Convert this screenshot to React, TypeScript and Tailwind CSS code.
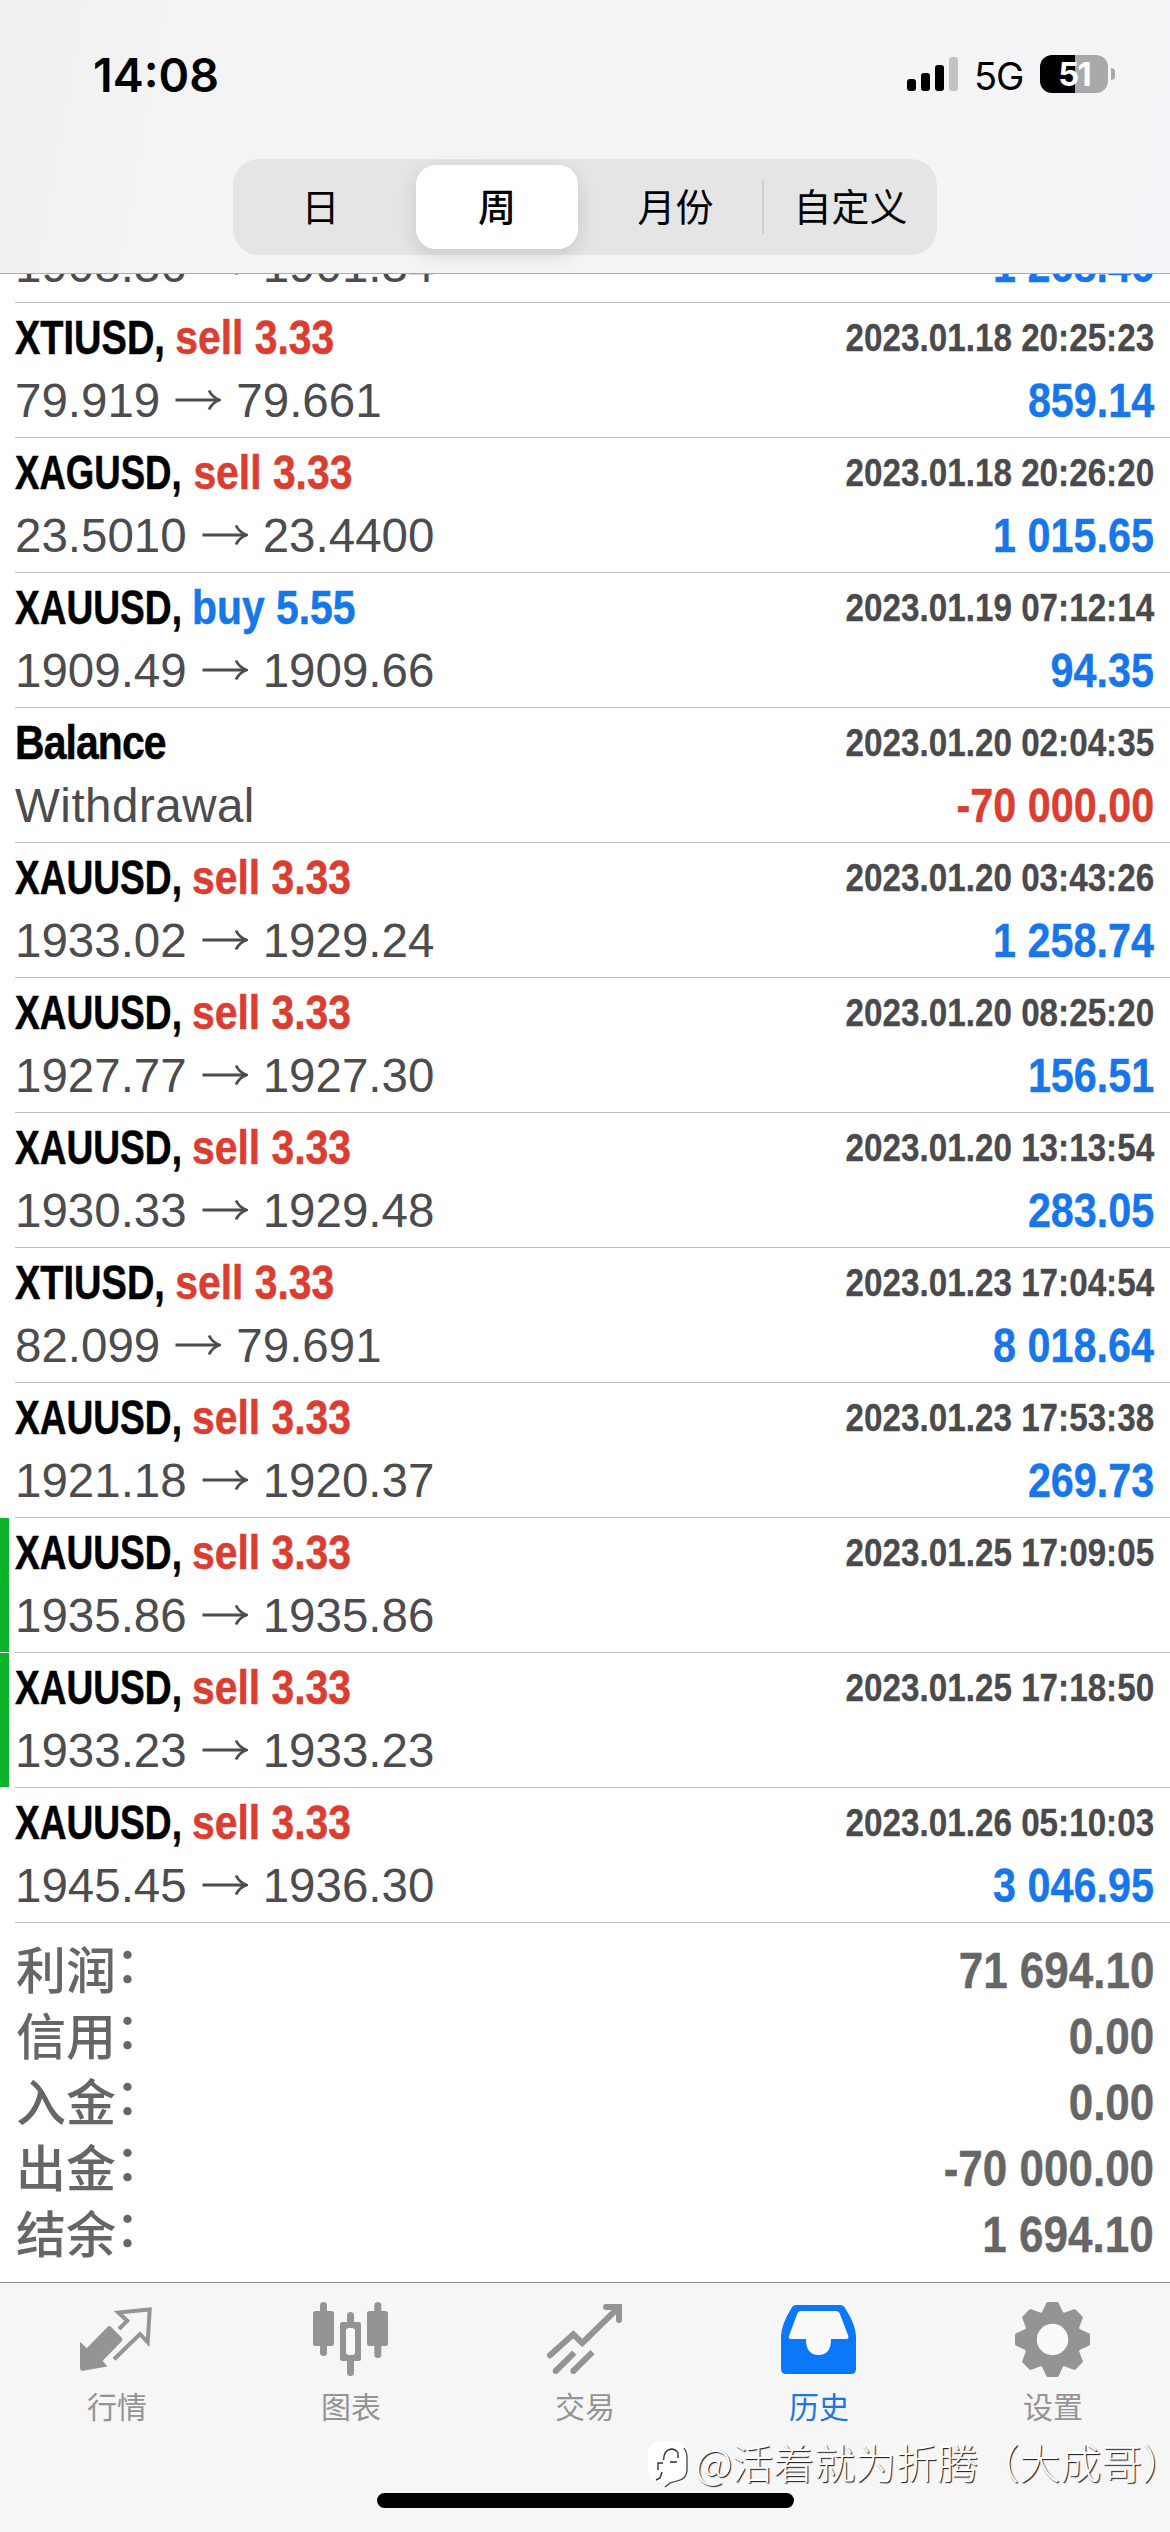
type Trade = {
  symbol: string;
  side?: 'sell' | 'buy';
  volume?: string;
  open?: string;
  close?: string;
  note?: string;
  time: string;
  profit?: string;
  marked?: boolean;
};

const trades: Trade[] = [
  { symbol: 'XTIUSD', side: 'sell', volume: '3.33', open: '79.919', close: '79.661', time: '2023.01.18 20:25:23', profit: '859.14' },
  { symbol: 'XAGUSD', side: 'sell', volume: '3.33', open: '23.5010', close: '23.4400', time: '2023.01.18 20:26:20', profit: '1 015.65' },
  { symbol: 'XAUUSD', side: 'buy', volume: '5.55', open: '1909.49', close: '1909.66', time: '2023.01.19 07:12:14', profit: '94.35' },
  { symbol: 'Balance', note: 'Withdrawal', time: '2023.01.20 02:04:35', profit: '-70 000.00' },
  { symbol: 'XAUUSD', side: 'sell', volume: '3.33', open: '1933.02', close: '1929.24', time: '2023.01.20 03:43:26', profit: '1 258.74' },
  { symbol: 'XAUUSD', side: 'sell', volume: '3.33', open: '1927.77', close: '1927.30', time: '2023.01.20 08:25:20', profit: '156.51' },
  { symbol: 'XAUUSD', side: 'sell', volume: '3.33', open: '1930.33', close: '1929.48', time: '2023.01.20 13:13:54', profit: '283.05' },
  { symbol: 'XTIUSD', side: 'sell', volume: '3.33', open: '82.099', close: '79.691', time: '2023.01.23 17:04:54', profit: '8 018.64' },
  { symbol: 'XAUUSD', side: 'sell', volume: '3.33', open: '1921.18', close: '1920.37', time: '2023.01.23 17:53:38', profit: '269.73' },
  { symbol: 'XAUUSD', side: 'sell', volume: '3.33', open: '1935.86', close: '1935.86', time: '2023.01.25 17:09:05', marked: true },
  { symbol: 'XAUUSD', side: 'sell', volume: '3.33', open: '1933.23', close: '1933.23', time: '2023.01.25 17:18:50', marked: true },
  { symbol: 'XAUUSD', side: 'sell', volume: '3.33', open: '1945.45', close: '1936.30', time: '2023.01.26 05:10:03', profit: '3 046.95' },
];

const summary = [
  ['利润', '71 694.10'],
  ['信用', '0.00'],
  ['入金', '0.00'],
  ['出金', '-70 000.00'],
  ['结余', '1 694.10'],
];

function StatusBar() {
  return (
    <div className="flex h-[159px] items-start justify-between pl-[93px] pr-[55px] text-black">
      <div className="mt-[47px] font-['Inter'] text-[46.5px] leading-[56px] font-semibold">14:08</div>
      <div className="mt-[55px] flex h-[38px] items-center">
        <div className="flex h-[34px] items-end gap-[5px]">
          <span className="h-[12px] w-[9px] rounded-[3px] bg-black" />
          <span className="h-[18px] w-[9px] rounded-[3px] bg-black" />
          <span className="h-[26px] w-[9px] rounded-[3px] bg-black" />
          <span className="h-[34px] w-[9px] rounded-[3px] bg-[#c3c3c4]" />
        </div>
        <div className="mt-[3px] ml-[16px] w-[50px] font-['Inter'] text-[38px] leading-[38px] tracking-[-1px]">5G</div>
        <div className="ml-[16px] flex h-[38px] w-[68px] items-center justify-center rounded-[12px] bg-[linear-gradient(90deg,#000_0_35px,#a9a9ab_35px)] font-['Inter'] text-[33px] leading-[38px] font-bold tracking-[-2px] text-white">
          51
        </div>
        <div className="ml-[3px] h-[12px] w-[4px] rounded-r-[4px] bg-[#a9a9ab]" />
      </div>
    </div>
  );
}

function Segmented() {
  return (
    <div className="mx-auto flex h-[96px] w-[704px] items-center rounded-[26px] bg-[#e5e5e6] font-['Noto_Sans_CJK_SC',sans-serif] text-[38px] text-black">
      <div className="w-[183px] pr-[8px] pb-[5px] text-center">日</div>
      <div className="flex h-[84px] w-[162px] items-center justify-center rounded-[20px] bg-white pb-[5px] font-medium shadow-[0_6px_20px_rgba(0,0,0,0.13)]">周</div>
      <div className="w-[184px] pb-[5px] pl-[11px] text-center">月份</div>
      <div className="h-[54px] w-[2px] bg-[#cfcfd1]" />
      <div className="w-[173px] pb-[5px] text-center">自定义</div>
    </div>
  );
}

function Arrow() {
  return (
    <svg className="mx-[15px] mt-[20px] h-[22px] w-[46px]" viewBox="0 0 46 22" fill="none" stroke="#4c4c4e" strokeWidth="2.8">
      <path d="M0.5 11H44" />
      <path d="M34 1.5Q37 8 44.5 11Q37 14 34 20.5" />
    </svg>
  );
}

function PriceLine({ t }: { t: Pick<Trade, 'open' | 'close' | 'note' | 'profit'> }) {
  const profitColor = t.profit?.startsWith('-') ? 'text-[#db3d30]' : 'text-[#1777ea]';
  return (
    <div className="flex h-[63px] justify-between text-[47.5px] leading-[63px] whitespace-nowrap">
      {t.note ? (
        <div className="tracking-[0.5px] text-[#4c4c4e]">{t.note}</div>
      ) : (
        <div className="flex text-[#4c4c4e]">
          <span>{t.open}</span>
          <Arrow />
          <span>{t.close}</span>
        </div>
      )}
      <div className={`origin-right scale-x-[0.87] font-bold [-webkit-text-stroke:0.4px_currentColor] ${profitColor}`}>{t.profit}</div>
    </div>
  );
}

function TradeRow({ t }: { t: Trade }) {
  const sideColor = t.side === 'buy' ? 'text-[#1478e8]' : 'text-[#db3d30]';
  const symbolFit = !t.side
    ? 'tracking-[-1px]'
    : t.symbol.startsWith('XT')
      ? '-mr-[1px] scale-x-[0.93]'
      : t.symbol.startsWith('XAG')
        ? '-mr-[9px] scale-x-[0.895]'
        : '-mr-[8px] scale-x-[0.908]';
  return (
    <div className="flex h-[135px] shrink-0">
      <div className={t.marked ? 'h-[134px] w-[9px] bg-[#0ab52c]' : 'w-[9px]'} />
      <div className="ml-[6px] flex flex-1 flex-col border-b border-[#bebebf] pt-[3px] pr-[16px]">
        <div className="flex h-[63px] justify-between whitespace-nowrap">
          <div className="flex origin-left scale-x-[0.86] text-[47.5px] leading-[63px] font-bold [-webkit-text-stroke:0.5px_currentColor]">
            <span className={`inline-block origin-left text-black ${symbolFit}`}>
              {t.symbol}
              {t.side ? ',' : ''}
            </span>
            {t.side && (
              <span className={sideColor}>
                {t.side} {t.volume}
              </span>
            )}
          </div>
          <div className="origin-right scale-x-[0.852] text-[39px] leading-[64px] font-bold text-[#4a4a4d] [-webkit-text-stroke:0.3px_currentColor]">{t.time}</div>
        </div>
        <PriceLine t={t} />
      </div>
    </div>
  );
}

function QuotesIcon() {
  return (
    <svg className="h-[84px] w-[84px]" viewBox="0 0 84 84">
      <path d="M5 45.7L11.7 52.3L32.5 31Q34.3 29 36.2 31L46.5 41.5Q48.5 43.5 46.5 45.5L27.7 64.7L32.3 70.5L8 74.8Q5 75 5 72Z" fill="#949494" />
      <path d="M44 33L52.3 24.7L43.3 16.5L74.7 13.5L72.7 46.3L65 38L39 63.3" fill="none" stroke="#949494" strokeWidth="4" />
    </svg>
  );
}

function ChartIcon() {
  return (
    <svg className="h-[84px] w-[84px]" viewBox="0 0 84 84" fill="#949494">
      <rect x="11" y="6" width="7" height="54" rx="3.5" />
      <rect x="4" y="15" width="21" height="35" rx="2.5" />
      <rect x="38" y="16" width="7" height="64" rx="3.5" />
      <rect x="31" y="26" width="21" height="39" rx="2.5" />
      <rect x="37" y="32" width="9" height="27" rx="3" fill="#f9f9f9" />
      <rect x="65.3" y="6" width="7" height="56" rx="3.5" />
      <rect x="58" y="15" width="21" height="35" rx="2.5" />
    </svg>
  );
}

function TradeIcon() {
  return (
    <svg className="h-[84px] w-[84px]" viewBox="0 0 84 84" fill="none" stroke="#949494" strokeWidth="6">
      <path d="M7 59.3L30.3 38.3L39.3 47L75 12" strokeLinecap="round" />
      <path d="M63 11H76V24" strokeLinecap="round" />
      <path d="M12.7 75L31.3 56.7M30.3 75L49.5 56.2" />
      <circle cx="12.7" cy="75" r="3" fill="#949494" stroke="none" />
      <circle cx="30.3" cy="75" r="3" fill="#949494" stroke="none" />
    </svg>
  );
}

function HistoryIcon() {
  return (
    <svg className="h-[84px] w-[84px]" viewBox="0 0 84 84">
      <path d="M19 9H63Q66.5 9 68 12Q78.5 28 79 40V73Q79 78 74 78H9Q4 78 4 73V40Q4.500 28 14.500 12Q16 9 19 9Z" fill="#0b79f7" />
      <path d="M24 15H59Q61.500 15 62.500 17L71.300 40Q72 43 69 43H54Q54 59 41.500 59Q29 59 29 43H14Q11 43 12 40L20.500 17Q21.500 15 24 15Z" fill="#fafafa" />
    </svg>
  );
}

function SettingsIcon() {
  return (
    <svg className="h-[84px] w-[84px]" viewBox="0 0 84 84">
      <g fill="#949494" stroke="#949494" strokeLinejoin="round" strokeWidth="4">
        {[0, 45, 90, 135, 180, 225, 270, 315].map((a) => (
          <path key={a} d="M37 8H46L51 19H32Z" transform={`rotate(${a} 41.5 43.5)`} />
        ))}
        <circle cx="41.5" cy="43.5" r="27" />
      </g>
      <circle cx="41.5" cy="43.5" r="15.7" fill="#f9f9f9" />
    </svg>
  );
}

const tabs = [
  { label: '行情', Icon: QuotesIcon },
  { label: '图表', Icon: ChartIcon },
  { label: '交易', Icon: TradeIcon },
  { label: '历史', Icon: HistoryIcon, active: true },
  { label: '设置', Icon: SettingsIcon },
];

function Watermark() {
  return (
    <div className="absolute top-[151px] left-[646px] flex h-[54px] items-center whitespace-nowrap">
      <svg className="mt-[6px] h-[48px] w-[46px]" viewBox="0 0 46 48" fill="none">
        <path d="M14 1H28Q41 2 41 15V27Q41 40 31 41H24L19 47V42H14Q2 41 2 29V14Q2 2 14 1Z" fill="#fff" />
        <path d="M38 8Q41 12 41 18V30Q41 39 31 41L24 43L19 47" stroke="#333" strokeWidth="1.200" />
        <path d="M32 18V13Q30 9 25 9Q18 10 17.500 20M16 32L14 38L10 40M12 30V23H17M24 22H31" stroke="#333" strokeWidth="1.400" />
      </svg>
      <span className="ml-[3px] font-['Noto_Sans_CJK_SC',sans-serif] text-[41px] leading-[54px] font-light text-white [text-shadow:1px_1px_1px_#111]">
        @活着就为折腾（大成哥）
      </span>
    </div>
  );
}

export default function App() {
  return (
    <div className="flex h-[2532px] w-[1170px] flex-col overflow-hidden bg-white font-['Liberation_Sans','Noto_Sans_CJK_SC',sans-serif]">
      <header className="z-10 h-[274px] shrink-0 border-b border-[#acacad] bg-[linear-gradient(100deg,#f0f0f0_0%,#f5f4f4_18%,#f5f5f6_70%,#f4f4f8_100%)]">
        <StatusBar />
        <Segmented />
      </header>

      <main className="flex h-[2008px] shrink-0 flex-col overflow-hidden">
        <div className="-mt-[40px] flex flex-col">
          <div className="ml-[15px] h-[69px] border-b border-[#bebebf] pr-[16px]">
            <PriceLine t={{ open: '1908.36', close: '1901.34', profit: '1 268.46' }} />
          </div>
          {trades.map((t) => (
            <TradeRow key={t.time} t={t} />
          ))}
        </div>
        <div className="pt-[15px] pr-[16px] pl-[16px] text-[#666]">
          {summary.map(([label, value]) => (
            <div key={label} className="flex h-[66px] justify-between text-[50px] leading-[66px]">
              <span className="flex font-['Noto_Sans_CJK_SC',sans-serif] leading-[59px] font-medium">
                {label}
                <span className="-mt-[6px] -ml-[1px]">：</span>
              </span>
              <span className="origin-right scale-x-[0.88] leading-[67px] font-bold [-webkit-text-stroke:0.4px_currentColor]">{value}</span>
            </div>
          ))}
        </div>
      </main>

      <footer className="relative h-[250px] shrink-0 border-t border-[#8c8c8e] bg-[#f6f6f6]">
        <nav className="grid grid-cols-5 pt-[13px]">
          {tabs.map(({ label, Icon, active }) => (
            <div key={label} className="flex flex-col items-center">
              <Icon />
              <span
                className={`mt-[5px] mb-[2px] font-['Noto_Sans_CJK_SC',sans-serif] text-[30px] leading-[40px] ${active ? 'text-[#1c75e8]' : 'text-[#949494]'}`}
              >
                {label}
              </span>
            </div>
          ))}
        </nav>
        <Watermark />
        <div className="mx-auto mt-[66px] h-[15px] w-[417px] rounded-full bg-black" />
      </footer>
    </div>
  );
}
